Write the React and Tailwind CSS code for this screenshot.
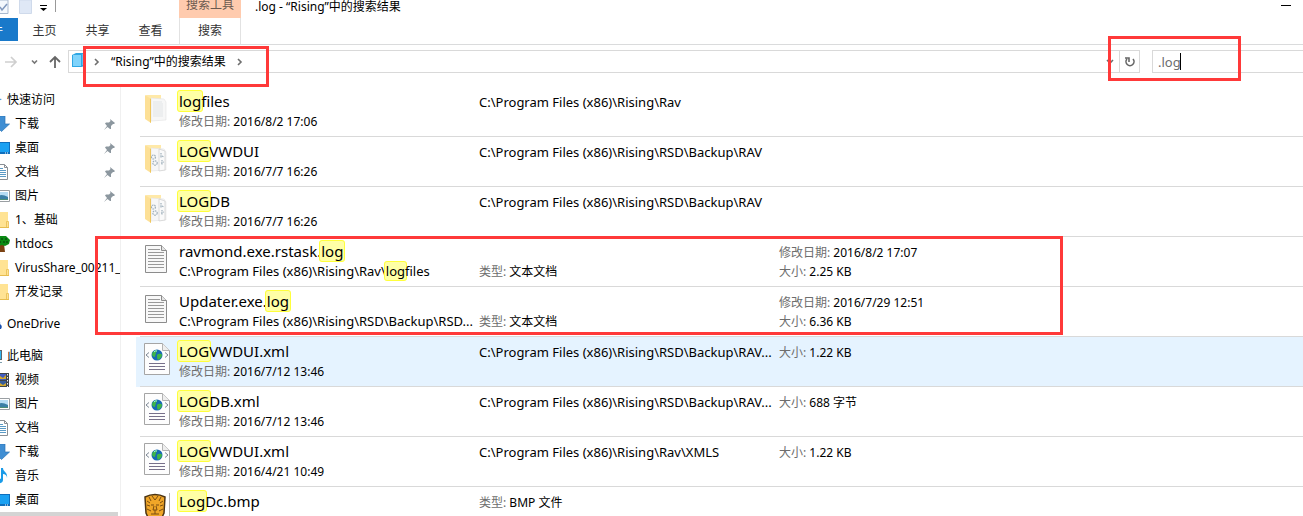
import { useState } from "react";

const FolderIcon = ({ variant }) => (
  <svg width="24" height="30" viewBox="0 0 24 30">
    <path d="M2 1h15v23H6z" fill="#ffe9a8" />
    <path d="M7 4l13 1 2 3v18l-15 1z" fill="#f7f7f7" stroke="#e2e2e2" strokeWidth=".6" />
    {variant === "text" ? (
      <path
        d="M9 8h9M9 10h10M9 12h10M9 14h10M9 16h10M9 18h10M9 20h10M9 22h10"
        stroke="#d9dde0"
        strokeWidth=".7"
      />
    ) : (
      <>
        <path d="M15 5l6 2v19l-6 1z" fill="#fafafa" stroke="#cfcfcf" strokeWidth=".7" />
        <g fill="none" stroke="#9fb0bb" strokeWidth="1.2" strokeDasharray="1.6 .7">
          <circle cx="9.500" cy="13" r="2" />
          <circle cx="11" cy="19" r="2.200" />
          <path d="M17 9v5M18 12l2 1M18 16v5M17 19l3-1" />
        </g>
      </>
    )}
    <path d="M1 1l6 4v24l-6-4z" fill="#fde096" />
    <path d="M6 4.500l1 .5v24l-1-.7z" fill="#f0c75e" />
  </svg>
);

const TextIcon = () => (
  <svg width="24" height="30" viewBox="0 0 24 30">
    <path d="M1.500 1.500h16l5 5v22h-21z" fill="#f8f8f8" stroke="#8c8c8c" />
    <path d="M17.500 1.500v5h5" fill="#e4e4e4" stroke="#8c8c8c" />
    <path
      d="M4 5.500h12M4 8.500h16M4 11.500h16M4 14.500h16M4 17.500h16M4 20.500h16M4 23.500h16"
      stroke="#999"
    />
  </svg>
);

const XmlIcon = () => (
  <svg width="26" height="32" viewBox="0 0 26 32">
    <path d="M.5.500h18l7 7v24h-25z" fill="#fdfdfd" stroke="#a5a5a5" />
    <path d="M18.500.500v7h7" fill="#eee" stroke="#b4b4b4" />
    <circle cx="13" cy="12" r="5.500" fill="#1769b5" />
    <path d="M8 11c1-3 3-4 5-4 1 1-1 2-1 3s-1 2-1 4c-2 0-3-1-3-3zM13 12c2-2 5-1 5 0 0 2-2 4-4 5-1-1-1-3-1-5z" fill="#3fb54a" />
    <path d="M10 9q1-1.500 3-1" stroke="#a8f0f5" fill="none" />
    <path d="M5 9.500L2 12l3 2.500M21 9.500l3 2.500-3 2.500" fill="none" stroke="#7c8794" />
    <path d="M5 20.500h16M5 23.500h16M5 26.500h16" stroke="#77718b" />
  </svg>
);

const BitmapIcon = () => (
  <svg width="26" height="32" viewBox="0 0 26 32">
    <path d="M25.500 0v32" stroke="#b5b5b5" />
    <path d="M1 4q10-5 20 0l-1 16-4 9H6l-4-9z" fill="#f0a628" stroke="#4d3514" strokeWidth="1.500" />
    <path
      d="M5 4l2 4M17 4l-2 4M8 3l3 4 3-4M3 8l3 2M19 8l-3 2M3 12l3 1M19 12l-3 1M7 12h3M12 12h3M10 13l-1 4h4l-1-4M3 16l4 2M19 16l-4 2M7 21h8M11 17v4"
      fill="none"
      stroke="#7a4d10"
    />
  </svg>
);

const fileIcons = {
  folder: <FolderIcon variant="text" />,
  folderGears: <FolderIcon variant="gears" />,
  text: <TextIcon />,
  xml: <XmlIcon />,
  bitmap: <BitmapIcon />,
};

const sideIcons = {
  star: <path d="M8 1l2 5 6 1-5 3 2 6-5-4-5 4 2-6-5-3 6-1z" fill="#3f95d8" />,
  download: <path d="M4 0h7v8h4.500L7.500 15.500 0 8h4z" fill="#3f8ed3" stroke="#2b73b5" strokeWidth=".7" />,
  desktop: (
    <>
      <path d="M0 2h16v12H0z" fill="#0f6fbd" />
      <path d="M1 3h14v9H1z" fill="#1ba1f2" />
      <path d="M11 13h1M13 13h1" stroke="#fff" />
    </>
  ),
  document: (
    <>
      <path d="M1.500.500h9l3 3v12h-12z" fill="#fff" stroke="#8a8f94" />
      <path d="M10.500.500v3h3" fill="none" stroke="#8a8f94" />
      <path d="M4 4.500h5M4 6.500h8M4 8.500h8M4 10.500h8M4 12.500h8" stroke="#5b9bc6" />
    </>
  ),
  picture: (
    <>
      <path d="M.5 2.500h15v11H.500z" fill="#fff" stroke="#9a9fa3" />
      <path d="M2 4h12v8H2z" fill="#b5dcf4" />
      <path d="M2 9q5-4 12 0v3H2z" fill="#3a7fa6" />
      <path d="M2 11h12v1H2z" fill="#4c8e75" />
    </>
  ),
  folder: (
    <>
      <path d="M0 0h14v16H0z" fill="#ffe394" />
      <path d="M12.500 9.500h2v6h-2z" fill="#ffe394" stroke="#e7bd50" strokeWidth=".8" />
      <path d="M0 15.500h15" stroke="#e7bd50" />
    </>
  ),
  tree: (
    <>
      <path d="M6 8h4l1 8H6z" fill="#7b4213" />
      <path d="M2 3l4-3h6l4 4-1 4-4 2-3-1-5 1-3-3z" fill="#0b8b14" />
      <path d="M7 3h2M11 3h2M9 6h2M5 6h2M12 6h2" stroke="#063d08" />
    </>
  ),
  cloud: <path d="M1 13q-2-6 4-6 1-5 6-3 4 1 3 4 3 2 1 5z" fill="#174fae" />,
  computer: (
    <>
      <path d="M0 2h16v10H0z" fill="#5a666e" />
      <path d="M1 3h14v8H1z" fill="#31b6ef" />
      <path d="M5 14.500h11" stroke="#7f9fae" />
    </>
  ),
  video: (
    <>
      <path d="M1 1h14v14H1z" fill="#3f454b" />
      <path d="M3 2h9v6H3z" fill="#415cc0" />
      <path d="M3 9h9v5H3z" fill="#385e9c" />
      <path d="M6 4l3 2 3-3v4H6zM6 11l3 2 3-2v3H6z" fill="#d4a92d" />
      <path d="M13.500 2v13" stroke="#eee" strokeDasharray="1.500 1.500" />
    </>
  ),
  music: <path d="M7 0h2c0 4 5 4 4 10 0-3-2-4-4-4v6c0 4-6 4-6 1s3-3 4-2z" fill="#1a9be8" />,
};

const sidebar = [
  [
    { label: "快速访问", icon: "star", top: true },
    { label: "下载", icon: "download", pinned: true },
    { label: "桌面", icon: "desktop", pinned: true },
    { label: "文档", icon: "document", pinned: true },
    { label: "图片", icon: "picture", pinned: true },
    { label: "1、基础", icon: "folder" },
    { label: "htdocs", icon: "tree" },
    { label: "VirusShare_00211_", icon: "folder" },
    { label: "开发记录", icon: "folder" },
  ],
  [{ label: "OneDrive", icon: "cloud", top: true }],
  [
    { label: "此电脑", icon: "computer", top: true },
    { label: "视频", icon: "video" },
    { label: "图片", icon: "picture" },
    { label: "文档", icon: "document" },
    { label: "下载", icon: "download" },
    { label: "音乐", icon: "music" },
    { label: "桌面", icon: "desktop" },
  ],
];

const folderResults = [
  { icon: "folder", name: "[log]files", date: "2016/8/2 17:06", path: "C:\\Program Files (x86)\\Rising\\Rav" },
  { icon: "folderGears", name: "[LOG]VWDUI", date: "2016/7/7 16:26", path: "C:\\Program Files (x86)\\Rising\\RSD\\Backup\\RAV" },
  { icon: "folderGears", name: "[LOG]DB", date: "2016/7/7 16:26", path: "C:\\Program Files (x86)\\Rising\\RSD\\Backup\\RAV" },
];

const logResults = [
  {
    icon: "text",
    name: "ravmond.exe.rstask.[log]",
    location: "C:\\Program Files (x86)\\Rising\\Rav\\[log]files",
    type: "文本文档",
    modified: "2016/8/2 17:07",
    size: "2.25 KB",
  },
  {
    icon: "text",
    name: "Updater.exe.[log]",
    location: "C:\\Program Files (x86)\\Rising\\RSD\\Backup\\RSD...",
    type: "文本文档",
    modified: "2016/7/29 12:51",
    size: "6.36 KB",
  },
];

const otherResults = [
  { icon: "xml", name: "[LOG]VWDUI.xml", date: "2016/7/12 13:46", path: "C:\\Program Files (x86)\\Rising\\RSD\\Backup\\RAV...", size: "1.22 KB", active: true },
  { icon: "xml", name: "[LOG]DB.xml", date: "2016/7/12 13:46", path: "C:\\Program Files (x86)\\Rising\\RSD\\Backup\\RAV...", size: "688 字节" },
  { icon: "xml", name: "[LOG]VWDUI.xml", date: "2016/4/21 10:49", path: "C:\\Program Files (x86)\\Rising\\Rav\\XMLS", size: "1.22 KB" },
  { icon: "bitmap", name: "[Log]Dc.bmp", type: "BMP 文件" },
];

// The part in square brackets is the matched text
const Highlight = ({ text }) =>
  text.split(/[[\]]/).map((part, i) =>
    i % 2 ? (
      <mark key={i} className="-mx-0.5 rounded-[3px] border border-[#ffff3c] bg-[#ffffa6] px-px text-black">
        {part}
      </mark>
    ) : (
      part
    )
  );

const Field = ({ label, value }) => (
  <p>
    <span className="text-[#6d6d6d]">{label}:</span> {value}
  </p>
);

const ResultRow = ({ item }) => (
  <li className={item.active ? "bg-[#e5f3ff] pl-1" : "pl-1"}>
    <div className="flex h-[50px] items-start border-b border-[#d9d9d9] pt-1 leading-[19px]">
      <div className="flex h-9 w-[39px] shrink-0 items-center pl-1">{fileIcons[item.icon]}</div>
      <div className="w-[300px] shrink-0 whitespace-nowrap">
        <a href="#" className="mb-px block text-[15px] leading-5">
          <Highlight text={item.name} />
        </a>
        {item.date && <Field label="修改日期" value={item.date} />}
        {item.location && (
          <p className="text-[13px]">
            <Highlight text={item.location} />
          </p>
        )}
      </div>
      <div className={item.location ? "w-[300px] shrink-0 pt-[21px]" : "w-[300px] shrink-0 pt-0.5"}>
        {item.path && <p className="whitespace-nowrap text-[13px]">{item.path}</p>}
        {item.type && <Field label="类型" value={item.type} />}
      </div>
      <div className="whitespace-nowrap pt-0.5">
        {item.modified && <Field label="修改日期" value={item.modified} />}
        {item.size && <Field label="大小" value={item.size} />}
      </div>
    </div>
  </li>
);

const Pin = () => (
  <svg width="11" height="11" viewBox="0 0 11 11" className="ml-auto mr-[5px]">
    <path d="M6 0l5 4-1 1H9L7 7v3L6 10 3.500 8 0 11l3-4L1 4.500l1-1h3L6.500 2z" fill="#8c979f" />
  </svg>
);

const Chevron = ({ down }) => (
  <svg width="8" height="8" viewBox="0 0 8 8" className="shrink-0">
    <path d={down ? "M1 2l3 3 3-3" : "M2 1l3 3-3 3"} fill="none" stroke="#6e6e6e" strokeWidth="1.600" />
  </svg>
);

const App = () => {
  const [query, setQuery] = useState(".log");

  return (
    <div className="flex h-screen flex-col overflow-hidden bg-white font-['Noto_Sans','Noto_Sans_CJK_SC',sans-serif] text-[12px] leading-5 text-black">
      <header className="shrink-0">
        <div className="flex h-[18px] items-start">
          <div className="w-[179px] shrink-0">
            <svg width="60" height="15" viewBox="0 0 60 15">
              <path d="M-1 0h9v13.500h-9" fill="#f4f8fd" stroke="#a9b9cf" />
              <path d="M0 7l2 3 5-6" fill="none" stroke="#8299bd" strokeWidth="1.500" />
              <path d="M19.500 0h12v13.500h-12z" fill="#dfe8f6" stroke="#cfdaeb" />
              <path d="M40 5.500h7" stroke="#000" />
              <path d="M40 8h7l-3.500 3z" />
              <path d="M55.500 0v12" stroke="#999" />
            </svg>
          </div>
          <div className="flex h-[18px] w-[62px] shrink-0 justify-center bg-[#ffcbae] leading-[10px] text-[#6b5a50]">
            搜索工具
          </div>
          <h1 className="pl-3.5 text-[12px] leading-[14px]">.log - “Rising”中的搜索结果</h1>
          <button aria-label="最小化" className="ml-auto mr-3 mt-[5px] h-px w-2.5 bg-black" />
        </div>
        <nav className="flex h-[27px] border-b border-[#dadbdc] leading-[26px] text-[#333]">
          <button className="h-[23px] w-[18px] shrink-0 overflow-hidden bg-[#1979ca] text-left text-white">
            <span className="-ml-[21px] whitespace-nowrap">文件</span>
          </button>
          <button className="h-[26px] w-[53px]">主页</button>
          <button className="h-[26px] w-[53px]">共享</button>
          <button className="h-[26px] w-[53px]">查看</button>
          <button className="ml-0.5 h-[26px] w-[62px] border-x border-[#e2e2e2]">搜索</button>
        </nav>
        <div className="relative flex h-[42px] items-start pt-[5px]">
          <div className="flex h-6 w-[68px] shrink-0 items-center">
            <svg width="68" height="24" viewBox="0 0 68 24" fill="none">
              <path d="M5 12h11M11 7l5 5-5 5" stroke="#cfcfcf" strokeWidth="1.700" />
              <path d="M32 10.500l2.500 2.500 2.500-2.500" stroke="#777" strokeWidth="1.600" />
              <path d="M55 18V7M50 12l5-5 5 5" stroke="#666" strokeWidth="1.800" />
            </svg>
          </div>
          <div className="flex h-[23px] min-w-0 flex-1 items-center border border-[#d9d9d9]">
            <svg width="16" height="18" viewBox="0 0 16 18" className="ml-0.5">
              <path d="M1 2l4-2h9v12l-3 2H1z" fill="#2fa7e4" />
              <path d="M2 2h8v11H2z" fill="#7fd3fb" />
              <path d="M11 1h2v11h-2z" fill="#5cc2f5" />
            </svg>
            <div className="flex items-center gap-2.5 pl-1.5">
              <Chevron />
              <span>“Rising”中的搜索结果</span>
              <Chevron />
            </div>
            <div className="ml-auto pr-[5px]">
              <Chevron down />
            </div>
            <button aria-label="刷新" className="flex h-full w-5 items-center justify-center border-l border-[#d9d9d9]">
              <svg width="12" height="12" viewBox="0 0 12 12">
                <path d="M3 3a4 4 0 1 0 6 0M1 2h4v4" fill="none" stroke="#666" strokeWidth="1.600" />
              </svg>
            </button>
          </div>
          <div className="relative ml-3 w-[151px] shrink-0">
            <input
              aria-label="搜索"
              value={query}
              onChange={(e) => setQuery(e.target.value)}
              className="block h-[23px] w-full border border-r-0 border-[#d9d9d9] pl-[5px] text-[13px] text-[#6d6d6d] caret-transparent outline-none"
            />
            <span className="pointer-events-none absolute left-7 top-[3px] h-[17px] w-px bg-black" />
          </div>
          <div className="pointer-events-none absolute left-[83px] top-px h-[41px] w-[186px] border-3 border-[#ff3939]" />
          <div className="pointer-events-none absolute right-[62px] -top-[9px] h-[45px] w-[133px] border-3 border-[#ff3939]" />
        </div>
      </header>

      <div className="flex min-h-0 flex-1">
        <aside className="flex w-[121px] shrink-0 flex-col overflow-hidden border-r border-[#f0f0f0] pt-px">
          <div className="-ml-3.5 flex flex-col gap-2">
            {sidebar.map((group, i) => (
              <ul key={i}>
                {group.map((item) => (
                  <li key={item.label}>
                    <a href="#" className={`flex h-6 items-center whitespace-nowrap ${item.top ? "" : "pl-2"}`}>
                      <svg width="16" height="16" viewBox="0 0 16 16" className="mr-[5px] shrink-0">
                        {sideIcons[item.icon]}
                      </svg>
                      {item.label}
                      {item.pinned && <Pin />}
                    </a>
                  </li>
                ))}
              </ul>
            ))}
          </div>
          <div className="mr-0.5 h-1 shrink-0 bg-[#d4d4d4]" />
        </aside>

        <main className="min-w-0 flex-1 pl-[15px]">
          <ul>
            {folderResults.map((item, i) => (
              <ResultRow key={i} item={item} />
            ))}
          </ul>
          <div className="relative">
            <ul>
              {logResults.map((item, i) => (
                <ResultRow key={i} item={item} />
              ))}
            </ul>
            <div className="pointer-events-none absolute -left-[41px] right-60 -top-px h-[99px] border-3 border-[#ff3939]" />
          </div>
          <ul>
            {otherResults.map((item, i) => (
              <ResultRow key={i} item={item} />
            ))}
          </ul>
        </main>
      </div>
    </div>
  );
};

export default App;
